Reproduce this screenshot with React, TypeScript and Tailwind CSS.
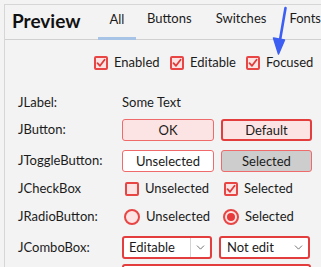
import { ChevronDown } from 'lucide-react';

const font = { fontFamily: 'Lato, "Noto Sans", sans-serif' };

function Check({ checked }: { checked: boolean }) {
  return (
    <span className="w-[14px] h-[14px] rounded-[2px] border-2 border-[#e84545] bg-[#fde4e4] flex items-center justify-center">
      {checked && (
        <svg width="10" height="10" viewBox="0 0 10 10" fill="none">
          <path d="M1.5 5.2L4 7.8L8.6 1.8" stroke="#e03a3a" strokeWidth="1.8" strokeLinecap="round" strokeLinejoin="round" />
        </svg>
      )}
    </span>
  );
}

function Radio({ selected }: { selected: boolean }) {
  return (
    <span className="w-[16px] h-[16px] rounded-full border-2 border-[#e84545] bg-[#fde4e4] flex items-center justify-center">
      {selected && <span className="w-[8px] h-[8px] rounded-full bg-[#e83a3a]" />}
    </span>
  );
}

const rowLabel = "text-[13px] text-[#1b1b1b]";

export default function App() {
  return (
    <div className="w-[321px] h-[267px] bg-[#f3f3f3] overflow-hidden relative text-[#1b1b1b]" style={font}>
      <div className="mt-[4px] ml-[4px] border-t border-l border-[#d6d6d6] h-full">
        {/* header + tabs */}
        <div className="flex items-end h-[35px] border-b border-[#d0d0d0] pl-[7px]">
          <div className="text-[19px] font-bold leading-none pb-[9px] w-[89px] text-[#111]">Preview</div>
          <div className="flex text-[13px] items-end">
            <div className="w-[38px] text-center pb-[8px] border-b-[3px] border-[#a7c3e5] relative top-[1px]">All</div>
            <div className="pl-[11px] pr-[24px] pb-[11px]">Buttons</div>
            <div className="pr-[23px] pb-[11px]">Switches</div>
            <div className="pb-[11px]">Fonts</div>
          </div>
        </div>

        {/* state checkboxes */}
        <div className="flex items-center h-[31px] pl-[89px] mt-[7px] text-[13px] gap-[6px]">
          <Check checked />
          <span className="w-[50px]">Enabled</span>
          <Check checked />
          <span className="w-[50px]">Editable</span>
          <Check checked />
          <span>Focused</span>
        </div>

        {/* component rows */}
        <div className="pl-[13px] mt-[12px] flex flex-col">
          <div className="flex items-center h-[26px]">
            <span className={`${rowLabel} w-[104px]`}>JLabel:</span>
            <span className="text-[13px]">Some Text</span>
          </div>
          <div className="flex items-center h-[28px] gap-[7px]">
            <span className={`${rowLabel} w-[97px]`}>JButton:</span>
            <button className="w-[92px] h-[22px] rounded-[3px] border border-[#ef6b6b] bg-[#fde4e4] text-[13px] leading-none">OK</button>
            <button className="w-[91px] h-[22px] rounded-[3px] border-2 border-[#e33d3d] bg-[#fde4e4] text-[13px] leading-none">Default</button>
          </div>
          <div className="flex items-center h-[34px] gap-[7px]">
            <span className={`${rowLabel} w-[97px]`}>JToggleButton:</span>
            <button className="w-[92px] h-[22px] rounded-[3px] border border-[#ef6b6b] bg-white text-[13px] leading-none">Unselected</button>
            <button className="w-[91px] h-[22px] rounded-[3px] border border-[#ef6b6b] bg-[#cdcdcd] text-[13px] leading-none">Selected</button>
          </div>
          <div className="flex items-center h-[22px]">
            <span className={`${rowLabel} w-[107px]`}>JCheckBox</span>
            <span className="w-[99px] flex items-center gap-[6px] text-[13px]"><Check checked={false} />Unselected</span>
            <span className="flex items-center gap-[6px] text-[13px]"><Check checked />Selected</span>
          </div>
          <div className="flex items-center h-[34px]">
            <span className={`${rowLabel} w-[106px]`}>JRadioButton:</span>
            <span className="w-[99px] flex items-center gap-[6px] text-[13px]"><Radio selected={false} />Unselected</span>
            <span className="flex items-center gap-[6px] text-[13px]"><Radio selected />Selected</span>
          </div>
          <div className="flex items-center h-[27px] gap-[7px]">
            <span className={`${rowLabel} w-[97px]`}>JComboBox:</span>
            <div className="w-[90px] h-[23px] rounded-[3px] border-2 border-[#e33d3d] bg-white flex items-center">
              <span className="flex-1 pl-[5px] text-[13px]">Editable</span>
              <span className="w-[20px] h-full border-l border-[#d4d4d4] flex items-center justify-center">
                <ChevronDown size={13} strokeWidth={1.5} className="text-[#555]" />
              </span>
            </div>
            <div className="w-[91px] h-[23px] rounded-[3px] border-2 border-[#e33d3d] bg-white flex items-center">
              <span className="flex-1 pl-[6px] text-[13px]">Not edit</span>
              <span className="w-[20px] flex items-center justify-center">
                <ChevronDown size={13} strokeWidth={1.5} className="text-[#555]" />
              </span>
            </div>
          </div>
          <div className="flex items-center mt-[3px]">
            <span className="w-[104px]" />
            <div className="w-[189px] h-[23px] rounded-[3px] border-2 border-[#e33d3d] bg-white" />
          </div>
        </div>
      </div>

      {/* annotation arrow */}
      <svg className="absolute left-[268px] top-[5px]" width="24" height="52" viewBox="0 0 24 52" fill="none">
        <path d="M17.5 3L11.5 38" stroke="#3d5ef2" strokeWidth="2.6" strokeLinecap="round" />
        <path d="M5.5 33L10.5 49L16.5 35Z" fill="#3d5ef2" stroke="#3d5ef2" strokeWidth="1.5" strokeLinejoin="round" />
      </svg>
    </div>
  );
}
